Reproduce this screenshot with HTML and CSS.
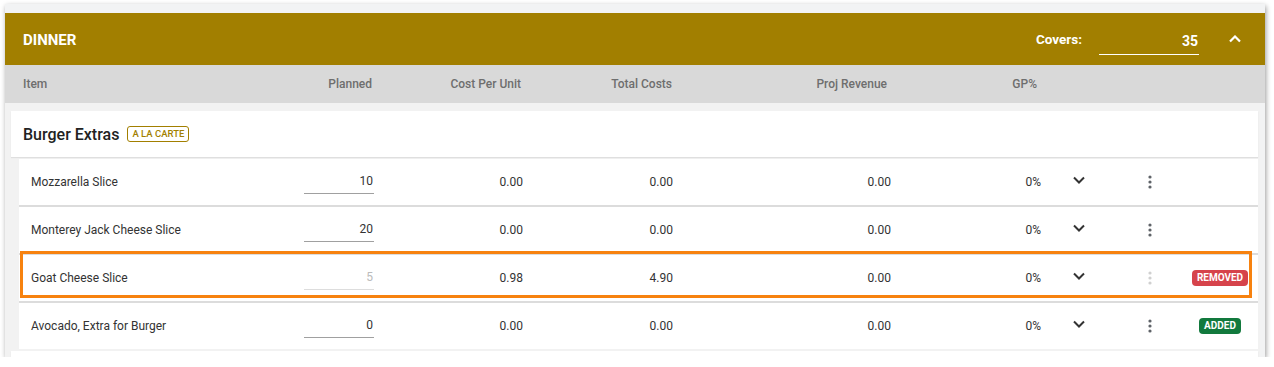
FILE: index.html
```html
<!DOCTYPE html>
<html>
<head>
    <meta charset="UTF-8">
    <title>Dinner</title>
    <link rel="stylesheet" href="styles.css">
</head>
<body>
<div class="panel">
    <!-- meal header -->
    <div class="meal-head">
        <div class="meal-title">DINNER</div>
        <div class="covers">
            <span class="covers-label">Covers:</span>
            <span class="covers-input">35</span>
            <span class="collapse">
                <svg width="12" height="8" viewBox="0 0 12 8"><path d="M1 6.5l5-5 5 5" fill="none" stroke="#fff" stroke-width="2.2"/></svg>
            </span>
        </div>
    </div>

    <!-- column titles -->
    <div class="col-head">
        <div>Item</div>
        <div class="num">Planned</div>
        <div class="num">Cost Per Unit</div>
        <div class="num">Total Costs</div>
        <div class="num">Proj Revenue</div>
        <div class="num">GP%</div>
    </div>

    <div class="meal-body">
        <div class="group-head">
            <span class="group-name">Burger Extras</span>
            <span class="tag">A LA CARTE</span>
        </div>
        <div class="items">
            <div class="item">
                <div class="name">Mozzarella Slice</div>
                <div class="planned"><span class="qty">10</span></div>
                <div class="num">0.00</div>
                <div class="num">0.00</div>
                <div class="num">0.00</div>
                <div class="num">0%</div>
                <div class="icon chev"><svg width="12" height="8" viewBox="0 0 12 8"><path d="M1 1.5l5 5 5-5" fill="none" stroke="#333" stroke-width="2"/></svg></div>
                <div class="icon"><svg width="4" height="14" viewBox="0 0 4 14"><circle cx="2" cy="2" r="1.6" fill="#5f6368"/><circle cx="2" cy="7" r="1.6" fill="#5f6368"/><circle cx="2" cy="12" r="1.6" fill="#5f6368"/></svg></div>
                <div class="icon"></div>
            </div>
            <div class="item">
                <div class="name">Monterey Jack Cheese Slice</div>
                <div class="planned"><span class="qty">20</span></div>
                <div class="num">0.00</div>
                <div class="num">0.00</div>
                <div class="num">0.00</div>
                <div class="num">0%</div>
                <div class="icon chev"><svg width="12" height="8" viewBox="0 0 12 8"><path d="M1 1.5l5 5 5-5" fill="none" stroke="#333" stroke-width="2"/></svg></div>
                <div class="icon"><svg width="4" height="14" viewBox="0 0 4 14"><circle cx="2" cy="2" r="1.6" fill="#5f6368"/><circle cx="2" cy="7" r="1.6" fill="#5f6368"/><circle cx="2" cy="12" r="1.6" fill="#5f6368"/></svg></div>
                <div class="icon"></div>
            </div>
            <div class="item removed">
                <div class="name">Goat Cheese Slice</div>
                <div class="planned"><span class="qty">5</span></div>
                <div class="num">0.98</div>
                <div class="num">4.90</div>
                <div class="num">0.00</div>
                <div class="num">0%</div>
                <div class="icon chev"><svg width="12" height="8" viewBox="0 0 12 8"><path d="M1 1.5l5 5 5-5" fill="none" stroke="#333" stroke-width="2"/></svg></div>
                <div class="icon"><svg width="4" height="14" viewBox="0 0 4 14"><circle cx="2" cy="2" r="1.6" fill="#d0d0d0"/><circle cx="2" cy="7" r="1.6" fill="#d0d0d0"/><circle cx="2" cy="12" r="1.6" fill="#d0d0d0"/></svg></div>
                <div class="icon"><span class="badge badge-red">REMOVED</span></div>
                <div class="highlight"></div>
            </div>
            <div class="item">
                <div class="name">Avocado, Extra for Burger</div>
                <div class="planned"><span class="qty">0</span></div>
                <div class="num">0.00</div>
                <div class="num">0.00</div>
                <div class="num">0.00</div>
                <div class="num">0%</div>
                <div class="icon chev"><svg width="12" height="8" viewBox="0 0 12 8"><path d="M1 1.5l5 5 5-5" fill="none" stroke="#333" stroke-width="2"/></svg></div>
                <div class="icon"><svg width="4" height="14" viewBox="0 0 4 14"><circle cx="2" cy="2" r="1.6" fill="#5f6368"/><circle cx="2" cy="7" r="1.6" fill="#5f6368"/><circle cx="2" cy="12" r="1.6" fill="#5f6368"/></svg></div>
                <div class="icon"><span class="badge badge-green">ADDED</span></div>
            </div>
        </div>
        <div class="group-head next"></div>
    </div>
</div>
</body>
</html>
```

FILE: styles.css
```css
* {
    margin: 0;
    padding: 0;
    box-sizing: border-box;
}

body {
    background-color: #fff;
    font-family: Roboto, "Liberation Sans", sans-serif;
    color: #333;
}

.panel {
    width: 1260px;
    margin: 4px 0 0 5px;
    padding-top: 9px;
    background-color: #f2f3f4;
    box-shadow: 1px 2px 5px rgba(0, 0, 0, 0.4);
}

/*金色标题栏*/
.meal-head {
    height: 52px;
    background-color: #a27f00;
    display: flex;
    align-items: center;
    justify-content: space-between;
    padding-left: 18px;
    color: #fff;
}

.meal-title {
    font-size: 15px;
    font-weight: 700;
    margin-top: 2px;
}

.covers {
    display: flex;
    align-items: center;
    font-size: 14px;
    font-weight: 700;
}

.covers-label {
    font-size: 13.5px;
}

.covers-input {
    width: 100px;
    margin-left: 17px;
    height: 26px;
    line-height: 24px;
    margin-top: 5px;
    text-align: right;
    border-bottom: 1px solid #fff;
    padding: 0 1px 3px 0;
}

.collapse {
    width: 24px;
    margin: 0 18px 0 24px;
    display: flex;
    justify-content: center;
}

/*列标题*/
.col-head {
    height: 38px;
    background-color: #d9d9d9;
    display: grid;
    grid-template-columns: 281px 68px 149px 151px 215px 150px;
    align-items: center;
    padding-left: 18px;
    font-size: 12px;
    font-weight: 500;
    color: #6e6e6e;
}

.num {
    text-align: right;
}

.meal-body {
    width: 1255px;
    height: 254px;
    overflow: hidden;
    background-color: #f2f2f2;
    padding: 8px 2px 0 6px;
}

.group-head {
    height: 46px;
    background-color: #fff;
    display: flex;
    align-items: center;
    padding-left: 12px;
    box-shadow: 0 1px 1px rgba(0, 0, 0, 0.08);
}

.group-head.next {
    margin-top: 2px;
}

.group-name {
    font-size: 16px;
    font-weight: 500;
    color: #222;
}

.tag {
    margin-left: 8px;
    height: 16px;
    line-height: 14px;
    padding: 0 4px;
    border: 1px solid #a27f00;
    border-radius: 3px;
    color: #a27f00;
    font-size: 9.5px;
    font-weight: 500;
}

.items {
    margin-left: 8px;
    background-color: #dcdcdc;
}

.item {
    position: relative;
    height: 46px;
    margin-top: 2px;
    background-color: #fff;
    display: grid;
    grid-template-columns: 273px 70px 149px 150px 218px 150px 76px 66px 74px;
    align-items: center;
    padding-left: 12px;
    font-size: 12px;
    color: #333;
}

.planned {
    display: flex;
}

.qty {
    display: block;
    width: 70px;
    height: 24px;
    line-height: 23px;
    text-align: right;
    padding-right: 1px;
    border-bottom: 1px solid #a0a0a0;
}

.removed .qty {
    color: #bbb;
    border-bottom-color: #ddd;
}

.icon {
    display: flex;
    justify-content: center;
    align-items: center;
}

.chev {
    margin-bottom: 4px;
}

.badge {
    height: 16px;
    line-height: 16px;
    padding: 0 5px;
    border-radius: 4px;
    color: #fff;
    font-size: 10px;
    font-weight: 700;
}

.badge-red {
    background-color: #d6434b;
}

.badge-green {
    background-color: #12793d;
}

/*标注框*/
.highlight {
    position: absolute;
    top: -4px;
    left: 1px;
    width: 1232px;
    height: 47px;
    border: 3px solid #f7820f;
    pointer-events: none;
}
```
